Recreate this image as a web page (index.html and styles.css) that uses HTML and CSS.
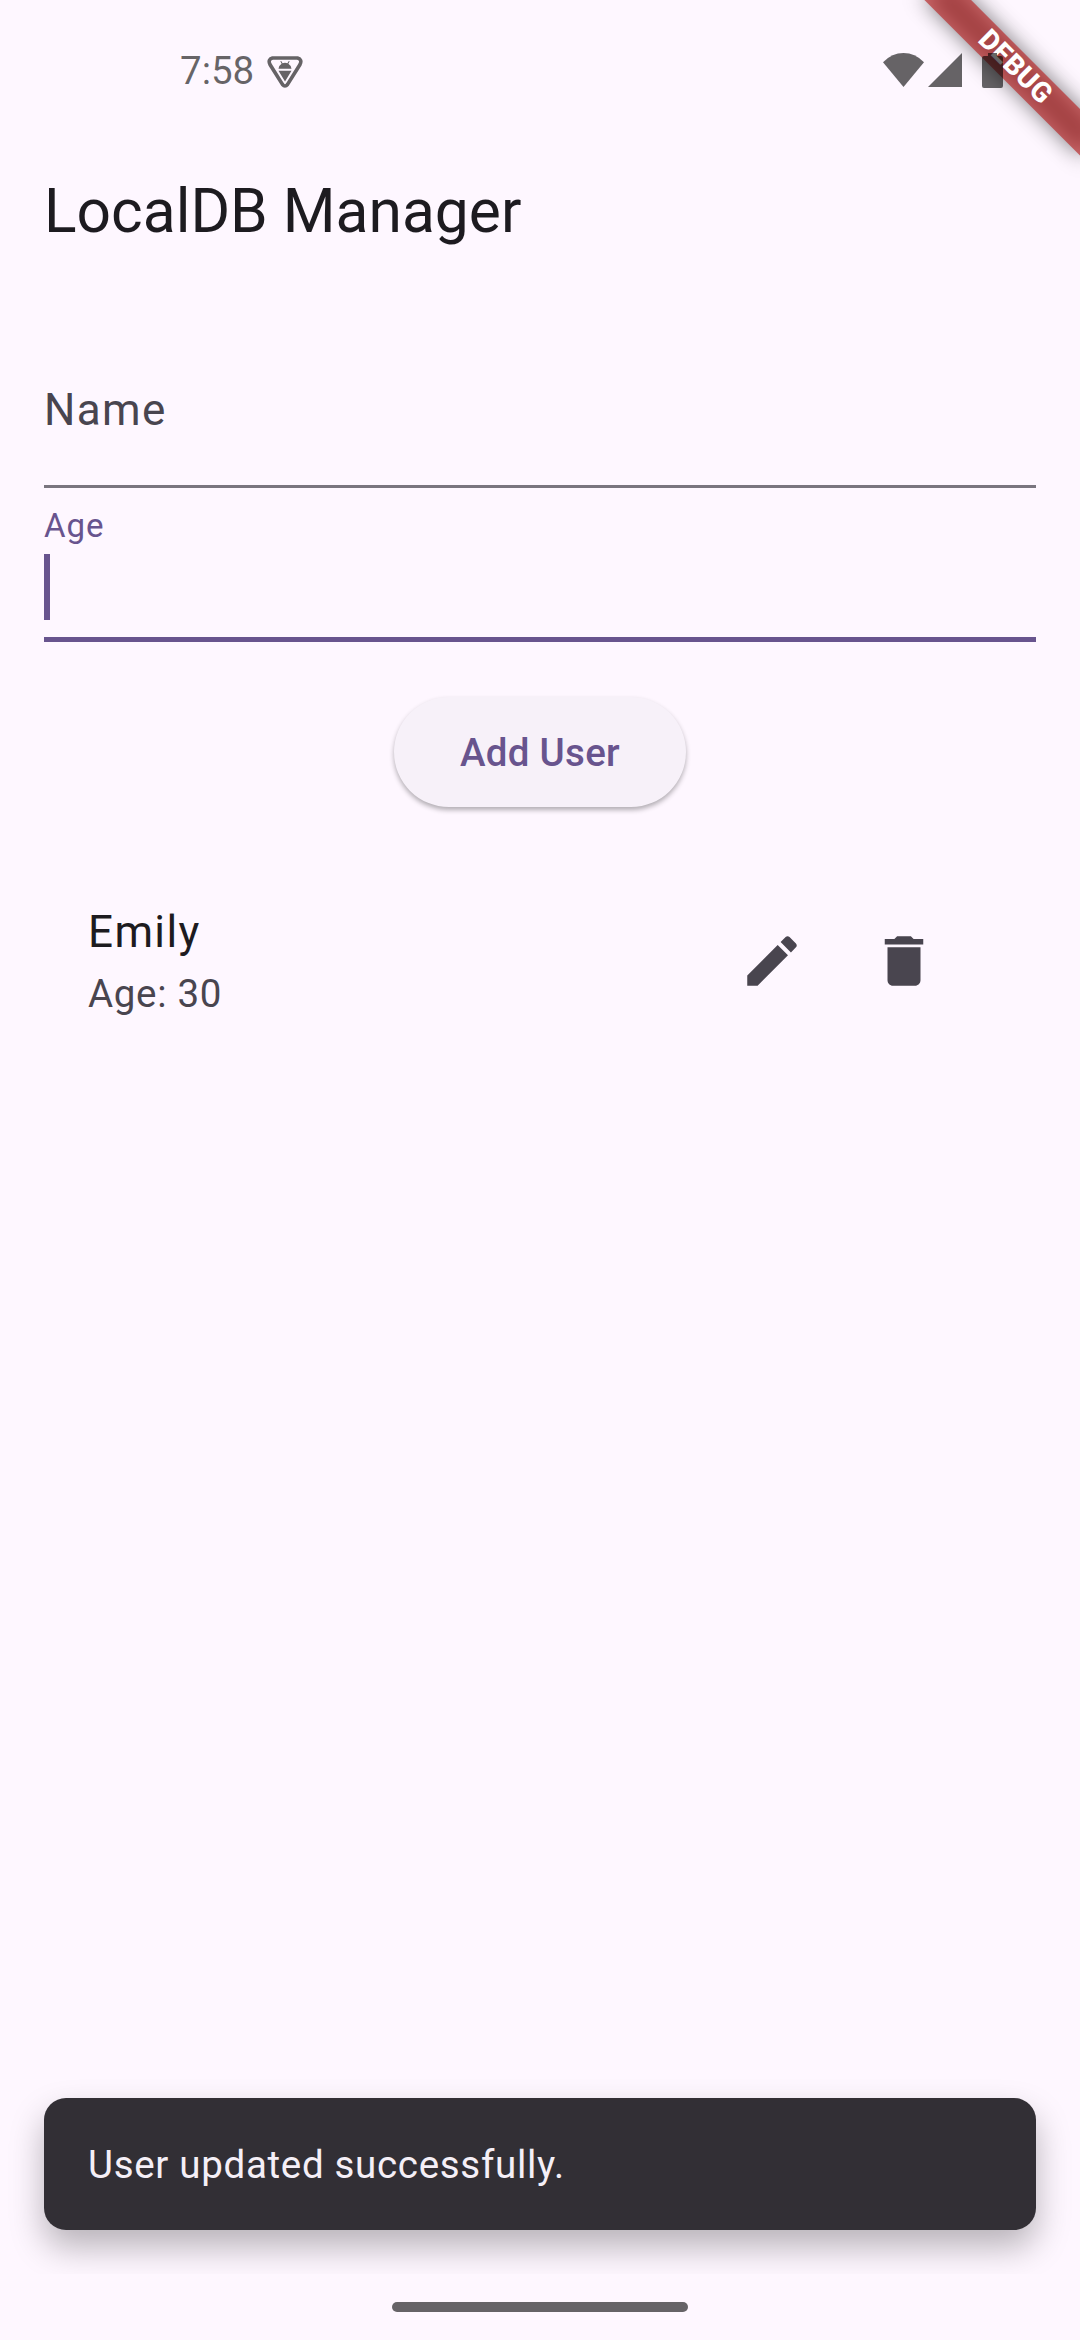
FILE: index.html
```html
<!DOCTYPE html>
<html lang="en">
<head>
<meta charset="utf-8">
<title>LocalDB Manager</title>
<link rel="stylesheet" href="styles.css">
</head>
<body>
<div class="screen">
  <div class="status-bar">
    <span class="clock">7:58</span>
    <svg class="shield" viewBox="0 0 36 32">
      <path d="M5.500 2H30.500Q35.500 3.500 33 8.500L20.500 28.500Q18 31.500 15.500 28.500L3 8.500Q.5 3.500 5.500 2Z" fill="none" stroke="currentColor" stroke-width="3.600"/>
      <path d="M11.500 12.800Q11.700 9.500 14.600 7.700L13.300 5.300L14.200 5L15.600 7.200Q18 6.300 20.400 7.200L21.800 5L22.700 5.300L21.400 7.700Q24.300 9.500 24.500 12.800ZM11.500 14.800H24.500L18 25.500Z" fill="currentColor"/>
    </svg>
    <span class="spacer"></span>
    <svg class="wifi" viewBox="0 0 41 34"><path d="M0 9.200Q9 0 20.500 0T41 9.200L20.500 34Z" fill="currentColor"/></svg>
    <svg class="signal" viewBox="0 0 34 34"><path d="M34 0V34H0Z" fill="currentColor"/></svg>
    <svg class="battery" viewBox="0 0 21 35"><path d="M6 0H15V3H19Q21 3 21 5V33Q21 35 19 35H2Q0 35 0 33V5Q0 3 2 3H6Z" fill="currentColor"/></svg>
  </div>
  <header class="app-bar"><h1>LocalDB Manager</h1></header>
  <main class="content">
    <div class="field"><span class="placeholder">Name</span></div>
    <div class="field focused">
      <span class="label">Age</span>
      <span class="cursor"></span>
    </div>
    <button class="add-button">Add User</button>
    <div class="user-row">
      <div class="user-text">
        <span class="user-name">Emily</span>
        <span class="user-age">Age: 30</span>
      </div>
      <div class="icon-button"><svg viewBox="0 0 24 24"><path fill="currentColor" d="M3 17.250V21h3.750L17.810 9.940l-3.750-3.750L3 17.250zM20.710 7.040c.39-.39.39-1.020 0-1.410l-2.340-2.340c-.39-.39-1.020-.39-1.410 0l-1.830 1.830 3.750 3.750 1.830-1.830z"/></svg></div>
      <div class="icon-button"><svg viewBox="0 0 24 24"><path fill="currentColor" d="M6 19c0 1.100.9 2 2 2h8c1.100 0 2-.9 2-2V7H6v12zM19 4h-3.500l-1-1h-5l-1 1H5v2h14V4z"/></svg></div>
    </div>
  </main>
  <div class="snack-area"><div class="snackbar">User updated successfully.</div></div>
  <div class="nav-bar"><span class="handle"></span></div>
  <div class="debug-banner"><span class="debug-text">DEBUG</span></div>
</div>
</body>
</html>
```

FILE: styles.css
```css
* { box-sizing: border-box; }
body { margin: 0; }
.screen {
  position: relative;
  display: flex;
  flex-direction: column;
  width: 1080px;
  height: 2340px;
  overflow: hidden;
  background: #fef7ff;
  color: #1d1b20;
  font-family: Roboto, sans-serif;
}
.status-bar {
  position: relative;
  z-index: 2;
  display: flex;
  align-items: flex-start;
  height: 134px;
  padding: 53px 77px 0 180px;
  color: rgba(0, 0, 0, 0.6);
}
.clock { margin-top: -5px; font-size: 38.5px; line-height: 46px; }
.shield { width: 36px; height: 32px; margin: 3px 0 0 13px; }
.spacer { flex: 1; }
.wifi { width: 41px; height: 34px; }
.signal { width: 34px; height: 34px; margin-left: 4px; }
.battery { width: 21px; height: 35px; margin-left: 20px; }
.app-bar { display: flex; align-items: center; height: 154px; padding: 0 44px; }
.app-bar h1 { margin: 0; font-size: 60.5px; font-weight: 400; line-height: 77px; }
.content { display: flex; flex-direction: column; flex: 1; padding: 44px 44px 0; }
.field {
  display: flex;
  align-items: center;
  height: 156px;
  border-bottom: 3px solid #7a757f;
}
.placeholder { padding-top: 3px; font-size: 44px; line-height: 66px; letter-spacing: 1.375px; color: #49454f; }
.focused {
  flex-direction: column;
  align-items: flex-start;
  height: 154px;
  padding-top: 13px;
  border-bottom: 5.5px solid #68548e;
}
.label { height: 53px; font-size: 33px; line-height: 50px; letter-spacing: 1.03px; color: #68548e; }
.cursor { width: 5.5px; height: 66px; background: #68548e; }
.add-button {
  align-self: center;
  width: 292px;
  height: 110px;
  margin-top: 55px;
  padding: 0;
  border: 0;
  border-radius: 55px;
  background: #f7f1f9;
  box-shadow: 0 3px 5px rgba(0, 0, 0, 0.3);
  font-family: Roboto, sans-serif;
  font-size: 38.5px;
  font-weight: 500;
  letter-spacing: 0.275px;
  color: #68548e;
}
.user-row { display: flex; align-items: center; height: 198px; margin-top: 55px; padding: 0 66px 0 44px; }
.user-text { display: flex; flex-direction: column; gap: 1px; flex: 1; padding-bottom: 2px; }
.user-name { font-size: 44px; line-height: 66px; letter-spacing: 1.375px; }
.user-age { font-size: 38.5px; line-height: 55px; letter-spacing: 0.6875px; color: #49454f; }
.icon-button { display: flex; align-items: center; justify-content: center; width: 132px; height: 132px; color: #49454f; }
.icon-button svg { width: 66px; height: 66px; }
.snack-area { height: 276px; padding: 100px 44px 44px; overflow: hidden; }
.snackbar {
  display: flex;
  align-items: center;
  height: 132px;
  padding: 0 44px;
  border-radius: 22px;
  background: #322f35;
  box-shadow: 0 17px 34px rgba(0, 0, 0, 0.28);
  font-size: 38.5px;
  letter-spacing: 0.6875px;
  color: #f5eff7;
}
.nav-bar { display: flex; justify-content: center; height: 66px; padding-top: 28px; }
.handle { width: 296px; height: 10px; border-radius: 5px; background: #666367; }
/* Corner ribbon pivots on the top-right corner of the screen. */
.debug-banner {
  position: absolute;
  z-index: 1;
  top: 77px;
  left: 970px;
  width: 220px;
  height: 33px;
  transform: rotate(45deg);
  transform-origin: 110px -77px;
}
.debug-banner::before {
  content: "";
  position: absolute;
  inset: 0;
  background: rgba(0, 0, 0, 0.5);
  filter: blur(10.9px);
}
.debug-text {
  position: relative;
  display: block;
  height: 33px;
  padding-left: 3px;
  background: rgba(183, 28, 28, 0.627);
  color: #fff;
  font-size: 28px;
  font-weight: 800;
  letter-spacing: 0.3px;
  line-height: 31px;
  text-align: center;
}
```
